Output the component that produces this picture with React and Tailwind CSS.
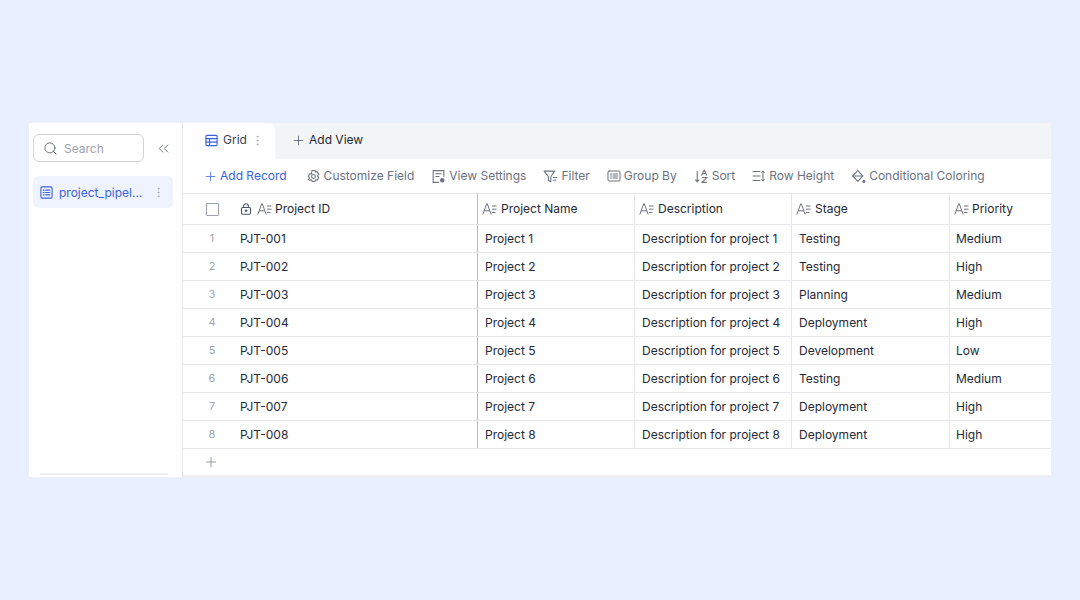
import { Plus, Search, ChevronsLeft, EllipsisVertical } from "lucide-react";

const rows = [
  ["PJT-001", "Project 1", "Description for project 1", "Testing", "Medium"],
  ["PJT-002", "Project 2", "Description for project 2", "Testing", "High"],
  ["PJT-003", "Project 3", "Description for project 3", "Planning", "Medium"],
  ["PJT-004", "Project 4", "Description for project 4", "Deployment", "High"],
  ["PJT-005", "Project 5", "Description for project 5", "Development", "Low"],
  ["PJT-006", "Project 6", "Description for project 6", "Testing", "Medium"],
  ["PJT-007", "Project 7", "Description for project 7", "Deployment", "High"],
  ["PJT-008", "Project 8", "Description for project 8", "Deployment", "High"],
];

function Svg({ size = 15, children, className }) {
  return (
    <svg
      width={size}
      height={size}
      viewBox="0 0 14 14"
      fill="none"
      stroke="currentColor"
      strokeWidth="1"
      strokeLinecap="round"
      strokeLinejoin="round"
      className={"shrink-0 " + (className || "")}
    >
      {children}
    </svg>
  );
}

function GridIcon() {
  return (
    <Svg size={13}>
      <rect x="1" y="1.5" width="12" height="11" rx="1" strokeWidth="1.2" />
      <path d="M1 5h12M1 8.800h12M5 5v7.500" strokeWidth="1.2" />
    </Svg>
  );
}

function SheetIcon() {
  return (
    <Svg size={13}>
      <rect x="1" y="1" width="12" height="12" rx="1.500" strokeWidth="1.2" />
      <path d="M3.500 4.500h1M6 4.500h4.500M3.500 7h1M6 7h4.500M3.500 9.500h1M6 9.500h4.500" strokeWidth="1.2" />
    </Svg>
  );
}

function TextFieldIcon() {
  return (
    <svg width="15" height="14" viewBox="0 0 15 14" fill="none" stroke="#6b7280" strokeWidth="1" className="shrink-0">
      <path d="M0.800 12.500 4.700 1.800h.6L9.200 12.500M2.200 8.800h5.600" />
      <path d="M10 4H14.500M10 7.200H14.500M10 10.400H13.500" />
    </svg>
  );
}

function LockIcon() {
  return (
    <Svg size={12} className="text-[#4b5563]">
      <rect x="1.800" y="5.200" width="10.400" height="7.800" rx="1.200" strokeWidth="1.2" />
      <path d="M4.300 5.200V3.600a2.700 2.700 0 0 1 5.400 0v1.600" strokeWidth="1.2" />
      <circle cx="7" cy="9" r="1" fill="currentColor" />
    </Svg>
  );
}

function GearIcon() {
  return (
    <Svg>
      <path d="M5.600 1.400h2.800l.5 1.500 1.600-.3 1.400 2.400-1 1.100v.8l1 1.100-1.400 2.400-1.600-.3-.5 1.500H5.600l-.5-1.500-1.600.3L2.100 9.800l1-1.100v-.8l-1-1.100 1.400-2.400 1.600.3z" />
      <circle cx="7" cy="7" r="1.800" />
    </Svg>
  );
}

function ViewSettingsIcon() {
  return (
    <Svg>
      <path d="M7 12.500H2V1.500h10v5.500" />
      <path d="M4.500 4.500h5M4.500 7h3" />
      <circle cx="10.500" cy="10.500" r="1.600" fill="currentColor" />
    </Svg>
  );
}

function FilterIcon() {
  return (
    <Svg>
      <path d="M1 2h10L7.300 7v5L5 10.500V7z" />
      <path d="M9.500 8h3.500M9.500 10.500h2.500" />
    </Svg>
  );
}

function GroupIcon() {
  return (
    <Svg size={14}>
      <rect x="1" y="2" width="12" height="10" rx="1" />
      <path d="M3.500 5h1M6 5h4.500M3.500 7h1M6 7h4.500M3.500 9h1M6 9h4.500" />
    </Svg>
  );
}

function SortIcon() {
  return (
    <svg width="15" height="15" viewBox="0 0 14 14" fill="none" stroke="currentColor" strokeWidth="1" className="shrink-0">
      <path d="M3 2v10M1.200 10 3 12l1.800-2" />
      <path d="M7 6 9.500 1 12 6M7.900 4.500h3.200" />
      <path d="M7.500 8h4.500L7.500 12.500H12" />
    </svg>
  );
}

function RowHeightIcon() {
  return (
    <Svg size={14}>
      <path d="M1 2.500h7M1 7h7M1 11.500h7" />
      <path d="M11 2v10M9.500 3.500 11 2l1.500 1.500M9.500 10.500 11 12l1.500-1.500" />
    </Svg>
  );
}

function BucketIcon() {
  return (
    <Svg size={15}>
      <path d="M6 1 11 6.500 6.500 11.500 1.500 6.500 5.500 2.500" />
      <path d="M1.500 6.500h9.500" />
      <circle cx="12" cy="11.500" r="1" fill="currentColor" />
    </Svg>
  );
}

const tools = [
  ["Customize Field", GearIcon],
  ["View Settings", ViewSettingsIcon],
  ["Filter", FilterIcon],
  ["Group By", GroupIcon],
  ["Sort", SortIcon],
  ["Row Height", RowHeightIcon],
  ["Conditional Coloring", BucketIcon],
];

const cols = "grid grid-cols-[295px_157px_157px_158px_101px]";

function Sidebar() {
  return (
    <div className="w-[154px] shrink-0 border-r border-[#e5e7eb] flex flex-col px-[4px] pt-[11px] pb-[2px]">
      <div className="flex items-center">
        <div className="w-[111px] h-[28px] rounded-[6px] border border-[#d1d5db] flex items-center pl-[9px] gap-[6px]">
          <Search size={15} strokeWidth={1.3} className="text-[#4b5563]" />
          <span className="text-[12px] text-[#9ca3af] relative top-[1px]">Search</span>
        </div>
        <ChevronsLeft size={17} strokeWidth={1.1} className="ml-[11px] text-[#4b5563]" />
      </div>
      <div className="mt-[14px] h-[32px] w-[140px] rounded-[6px] bg-[#eff3fe] flex items-center pl-[7px] text-[#3b63e0]">
        <SheetIcon />
        <span className="ml-[6px] text-[12px] whitespace-nowrap relative top-[1px]">project_pipel...</span>
        <EllipsisVertical size={13} strokeWidth={1.4} className="ml-[10px] text-[#9ca3af]" />
      </div>
      <div className="mt-auto mx-[7px] h-[2px] bg-[#eceef0] w-[128px]" />
    </div>
  );
}

function HeaderCell({ label, border }) {
  return (
    <div className={"flex items-center gap-[4px] pl-[4px] border-r " + border}>
      <TextFieldIcon />
      <span>{label}</span>
    </div>
  );
}

function Grid() {
  return (
    <div className="text-[12px] text-[#1f2937] whitespace-nowrap">
      <div className={cols + " h-[32px] border-y border-[#e5e7eb]"}>
        <div className="flex items-center border-r border-[#b8bcc2]">
          <div className="ml-[23px] w-[13px] h-[13px] border border-[#9ca3af] rounded-[1px]" />
          <div className="ml-[21px] flex items-center gap-[5px]">
            <LockIcon />
            <TextFieldIcon />
            <span className="-ml-[2px]">Project ID</span>
          </div>
        </div>
        <HeaderCell label="Project Name" border="border-[#e5e7eb]" />
        <HeaderCell label="Description" border="border-[#e5e7eb]" />
        <HeaderCell label="Stage" border="border-[#e5e7eb]" />
        <div className="flex items-center gap-[3px] pl-[4px]">
          <TextFieldIcon />
          <span>Priority</span>
        </div>
      </div>
      {rows.map((row, i) => (
        <div key={row[0]} className={cols + " h-[28px] border-b border-[#e5e7eb]"}>
          <div className="flex items-center border-r border-[#b8bcc2]">
            <span className="w-[57px] pl-[1px] text-center text-[11px] text-[#9ca3af]">{i + 1}</span>
            <span>{row[0]}</span>
          </div>
          <div className="flex items-center pl-[7px] border-r border-[#e5e7eb]">{row[1]}</div>
          <div className="flex items-center pl-[7px] border-r border-[#e5e7eb]">{row[2]}</div>
          <div className="flex items-center pl-[7px] border-r border-[#e5e7eb]">{row[3]}</div>
          <div className="flex items-center pl-[6px]">{row[4]}</div>
        </div>
      ))}
      <div className="h-[26px] flex items-center pl-[20px]">
        <Plus size={16} strokeWidth={1} className="text-[#6b7280]" />
      </div>
    </div>
  );
}

export default function App() {
  return (
    <div className="w-[1080px] h-[600px] bg-[#e8effe] pt-[123px] pl-[29px] font-['Inter',sans-serif]">
      <div className="w-[1022px] h-[354px] bg-white flex overflow-hidden">
        <Sidebar />
        <div className="flex-1 min-w-0 flex flex-col">
          <div className="h-[36px] bg-[#f3f4f6] flex items-stretch shrink-0">
            <div className="w-[92px] bg-white rounded-tr-[6px] flex items-center pl-[22px] pb-[2px] text-[12px] text-[#374151]">
              <span className="text-[#3b63e0]"><GridIcon /></span>
              <span className="ml-[5px]">Grid</span>
              <EllipsisVertical size={13} strokeWidth={1.4} className="ml-[4px] text-[#9ca3af]" />
            </div>
            <div className="flex items-center ml-[16px] pb-[2px] text-[12px] text-[#1f2937]">
              <Plus size={15} strokeWidth={1.2} className="text-[#4b5563]" />
              <span className="ml-[3px]">Add View</span>
            </div>
          </div>
          <div className="h-[34px] flex items-center pl-[20px] text-[12px] text-[#6b7280] shrink-0">
            <div className="flex items-center text-[#3b63e0]">
              <Plus size={15} strokeWidth={1.2} />
              <span className="ml-[2px]">Add Record</span>
            </div>
            <div className="flex items-center gap-[17px] ml-[19px]">
              {tools.map(([label, Icon]) => (
                <div key={label} className="flex items-center gap-[3px]">
                  <Icon />
                  <span>{label}</span>
                </div>
              ))}
            </div>
          </div>
          <Grid />
          <div className="mt-auto h-[2px] bg-[#f0f1f3]" />
        </div>
      </div>
    </div>
  );
}
